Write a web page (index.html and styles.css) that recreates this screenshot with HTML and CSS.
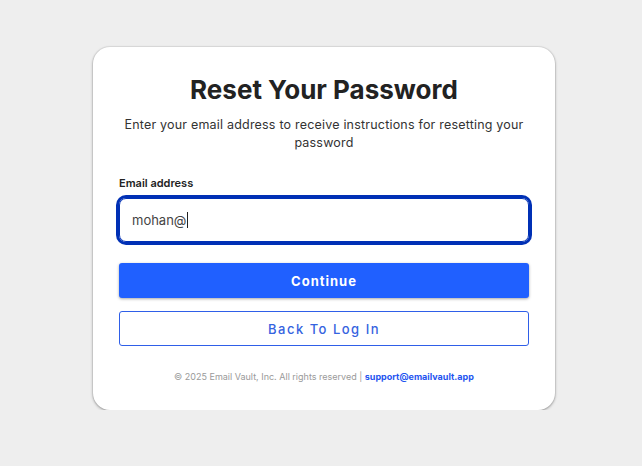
FILE: index.html
```html
<!DOCTYPE html>
<html lang="en">
<head>
  <meta charset="UTF-8">
  <title>Reset Your Password</title>
  <link rel="stylesheet" href="styles.css">
</head>
<body>
  <div class="card">
    <h1>Reset Your Password</h1>
    <p class="intro">Enter your email address to receive instructions for resetting your password</p>

    <form class="reset-form" onsubmit="return false">
      <label for="email">Email address</label>
      <div class="field">
        <span class="typed">mohan@</span><span class="caret"></span>
      </div>
      <button type="submit" class="btn primary">Continue</button>
      <button type="button" class="btn outline">Back To Log In</button>
    </form>

    <p class="footer">© 2025 Email Vault, Inc. All rights reserved | <a href="#">support@emailvault.app</a></p>
  </div>
</body>
</html>
```

FILE: styles.css
```css
body { margin: 0; background: #eeeeee; font-family: Inter, "Noto Sans", sans-serif; color: #222; }
.card {
  width: 462px; box-sizing: border-box; margin: 47px 0 0 93px;
  background: #fff; border-radius: 17px;
  box-shadow: 0 1px 3px rgba(0,0,0,.35), 0 0 0 1px #e2e2e2;
  padding: 26px 26px 28px;
}
h1 { margin: 0; text-align: center; font-size: 26px; font-weight: 700; color: #222; line-height: 34px; }
.intro { margin: 9px -4px 0; text-align: center; font-size: 12.5px; line-height: 18px; color: #333; letter-spacing: .2px; }
.reset-form { display: flex; flex-direction: column; margin-top: 24px; }
label { font-size: 11px; font-weight: 600; color: #222; margin-bottom: 8px; }
.field {
  height: 44px; box-sizing: border-box; display: flex; align-items: center;
  padding: 0 12px; border: 1px solid #0030b5; border-radius: 7px;
  box-shadow: 0 0 0 3px #0030b5; font-size: 13px; color: #444;
}
.caret { display: inline-block; width: 1px; height: 16px; background: #222; margin-left: 1px; }
.btn { height: 35px; border-radius: 3px; font-family: inherit; font-size: 13px; cursor: pointer; letter-spacing: 1px; }
.primary { margin-top: 21px; background: #2060ff; color: #fff; border: none; font-weight: 700; box-shadow: 0 1px 3px rgba(0,0,0,.35); }
.outline { margin-top: 13px; background: #fff; color: #3563e0; border: 1px solid #2f5fe8; font-weight: 500; letter-spacing: 1.5px; }
.footer { margin: 25px 0 0; text-align: center; font-size: 9px; color: #9a9a9a; }
.footer a { color: #1f55f0; font-weight: 700; text-decoration: none; }
```
